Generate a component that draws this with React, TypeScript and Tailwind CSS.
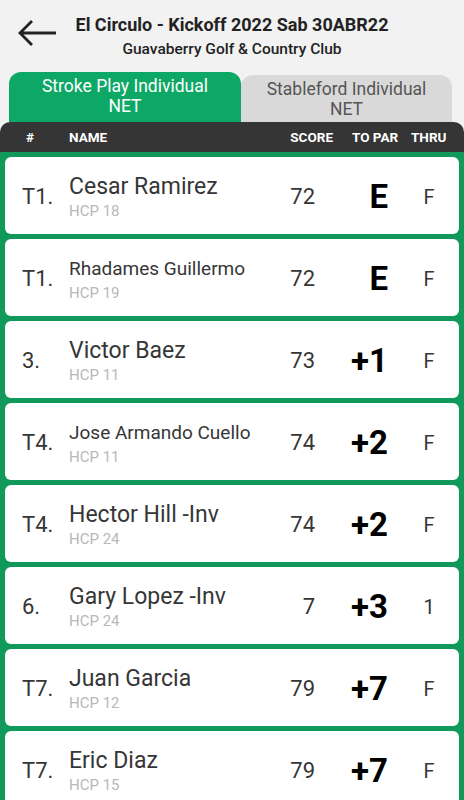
import React from "react";

const players = [
  { pos: "T1.", name: "Cesar Ramirez", hcp: 18, score: "72", par: "E", thru: "F" },
  { pos: "T1.", name: "Rhadames Guillermo", hcp: 19, score: "72", par: "E", thru: "F", small: true },
  { pos: "3.", name: "Victor Baez", hcp: 11, score: "73", par: "+1", thru: "F" },
  { pos: "T4.", name: "Jose Armando Cuello", hcp: 11, score: "74", par: "+2", thru: "F", small: true },
  { pos: "T4.", name: "Hector Hill -Inv", hcp: 24, score: "74", par: "+2", thru: "F" },
  { pos: "6.", name: "Gary Lopez -Inv", hcp: 24, score: "7", par: "+3", thru: "1" },
  { pos: "T7.", name: "Juan Garcia", hcp: 12, score: "79", par: "+7", thru: "F" },
  { pos: "T7.", name: "Eric Diaz", hcp: 15, score: "79", par: "+7", thru: "F" },
];

const App = () => {
  return (
    <div className="w-[464px] h-[800px] overflow-hidden bg-[#f2f2f2] font-['Roboto',sans-serif]">
      {/* Header */}
      <div className="relative h-[72px] flex flex-col items-center pt-[12px]">
        <button className="absolute left-[17px] top-[19px] w-[40px] h-[28px] flex items-center justify-center">
          <svg width="38" height="26" viewBox="0 0 38 26" fill="none">
            <path d="M37 13H3M13 2L2 13l11 11" stroke="#222" strokeWidth="2.8" strokeLinecap="square" />
          </svg>
        </button>
        <div className="text-[18px] leading-[26px] font-bold text-[#222]">El Circulo - Kickoff 2022 Sab 30ABR22</div>
        <div className="text-[15.5px] leading-[20px] font-medium text-[#222] mt-[1px]">Guavaberry Golf &amp; Country Club</div>
      </div>

      {/* Tabs */}
      <div className="flex items-end pl-[9px] pr-[12px] h-[50px]">
        <div className="w-[232px] h-[50px] rounded-t-[12px] bg-[#0ea866] text-white text-[17.5px] leading-[20px] flex flex-col items-center justify-center text-center pb-[2px]">
          <span>Stroke Play Individual</span>
          <span>NET</span>
        </div>
        <div className="flex-1 h-[47px] rounded-t-[12px] bg-[#d9d9d9] text-[#555] text-[17.5px] leading-[20px] flex flex-col items-center justify-center text-center">
          <span>Stableford Individual</span>
          <span>NET</span>
        </div>
      </div>

      {/* Column header */}
      <div className="h-[30px] rounded-t-[10px] bg-[#353535] text-white text-[13.5px] font-bold flex items-center">
        <div className="w-[69px] pl-[26px]">#</div>
        <div className="flex-1">NAME</div>
        <div className="w-[60px] text-right mr-[19px]">SCORE</div>
        <div className="w-[59px]">TO PAR</div>
        <div className="w-[53px]">THRU</div>
      </div>

      {/* Leaderboard */}
      <div className="bg-[#10995a] px-[5px] pt-[5px] pb-[5px] flex flex-col gap-[5px]">
        {players.map((p, i) => (
          <div key={i} className="h-[77px] shrink-0 rounded-[6px] bg-white flex items-center text-[#363636]">
            <div className="w-[64px] pl-[17px] text-[22px] pt-[2px]">{p.pos}</div>
            <div className="flex-1 pt-[4px] flex flex-col">
              <div className={p.small ? "text-[19px] leading-[24px]" : "text-[23px] leading-[24px]"}>{p.name}</div>
              <div className="text-[15px] leading-[17px] mt-[4px] text-[#b8b8b8]">HCP {p.hcp}</div>
            </div>
            <div className="w-[60px] text-right text-[22px] pt-[2px]">{p.score}</div>
            <div className="w-[73px] text-right text-[33px] font-bold text-black pt-[2px]">{p.par}</div>
            <div className="w-[71px] pl-[11px] text-center text-[20px] pt-[2px]">{p.thru}</div>
          </div>
        ))}
      </div>
    </div>
  );
};

export default App;
